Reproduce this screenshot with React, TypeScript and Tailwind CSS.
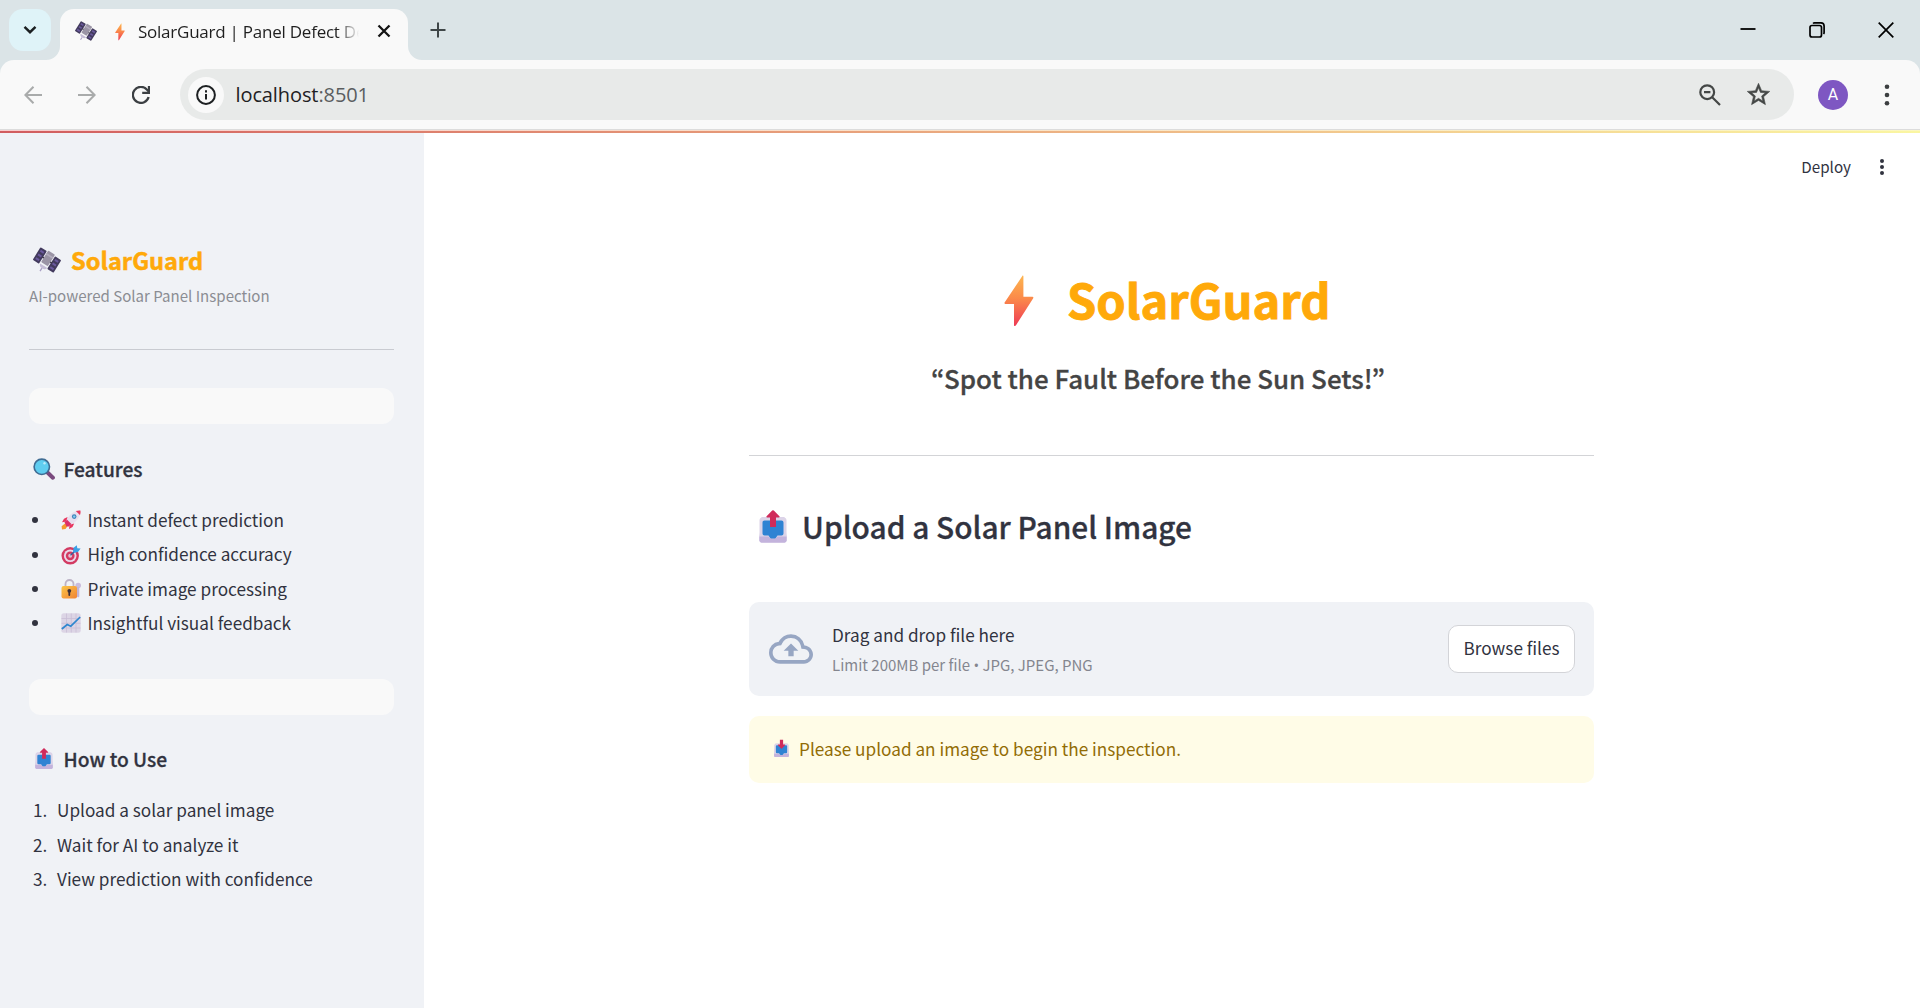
import type { ReactNode } from "react";

type IconProps = { className?: string };

const features: { icon: ReactNode; label: string }[] = [
  { icon: <Rocket className="size-[20px]" />, label: "Instant defect prediction" },
  { icon: <Target className="size-[20px]" />, label: "High confidence accuracy" },
  { icon: <Lock className="size-[20px]" />, label: "Private image processing" },
  { icon: <Chart className="size-[20px]" />, label: "Insightful visual feedback" },
];

const steps = ["Upload a solar panel image", "Wait for AI to analyze it", "View prediction with confidence"];

function Satellite({ className }: IconProps) {
  return (
    <svg viewBox="0 0 32 32" className={className}>
      <g transform="rotate(32 16 16)">
        <rect x="2" y="7.500" width="8.500" height="17" rx="1.200" fill="#433b5e" />
        <rect x="21.500" y="7.500" width="8.500" height="17" rx="1.200" fill="#433b5e" />
        <path d="M4 11h4.500M4 16h4.500M4 21h4.500M23.500 11h4.500M23.500 16h4.500M23.500 21h4.500" stroke="#6b5a9e" strokeWidth="2.400" />
        <path d="M10 16h12" stroke="#2f2b3a" strokeWidth="1.600" />
        <rect x="11.500" y="6" width="9" height="15.500" rx="1" fill="#9a94a5" />
        <path d="M11.500 10.500h9" stroke="#b3adbe" strokeWidth="2" />
        <path d="M11.500 23.500h9.500a4.800 4.200 0 0 1-9.500 0z" fill="#c5bdd6" />
        <path d="M16 27v4" stroke="#a89fc4" strokeWidth="1.500" />
      </g>
    </svg>
  );
}

function Bolt({ className }: IconProps) {
  return (
    <svg viewBox="0 0 30 52" className={className}>
      <defs>
        <linearGradient id="bolt" x1="0" y1="0" x2="0" y2="1">
          <stop offset="0" stopColor="#fdb54f" />
          <stop offset="0.45" stopColor="#fb8a4a" />
          <stop offset="1" stopColor="#ee3a55" />
        </linearGradient>
      </defs>
      <path d="M18.500 .8 .6 27.500c-.4.8 0 1.500.8 1.500H10v21.200c0 1 1.300 1.200 1.800.4L29.200 23.200c.5-.8 0-1.400-.8-1.400h-9V1.200c0-.7-.6-1-.9-.4z" fill="url(#bolt)" />
    </svg>
  );
}

function Tray({ className, down = false }: IconProps & { down?: boolean }) {
  return (
    <svg viewBox="0 0 28 33" className={className}>
      <path d="M2.500 7.500h23l2 20v3a2 2 0 0 1-2 2h-23a2 2 0 0 1-2-2v-3z" fill="#b9a5d6" />
      <rect x=".5" y="7.500" width="27" height="21" rx="3" fill="#dcd4e8" />
      <path d="M.5 26.500h9l2 2.500h5l2-2.500h9v4a2 2 0 0 1-2 2h-23a2 2 0 0 1-2-2z" fill="#c3b3dc" />
      <path d="M5.500 10.500h17a2 2 0 0 1 2 2v11a2 2 0 0 1-2 2h-4l-1.500 2.300a1.500 1.500 0 0 1-1.300.7h-3.400a1.500 1.500 0 0 1-1.300-.7l-1.500-2.300h-4a2 2 0 0 1-2-2v-11a2 2 0 0 1 2-2z" fill="#2f83d3" />
      <path d={down ? "M11 0h6v9h3.200c.8 0 1 .7.500 1.300l-6 6.200a1 1 0 0 1-1.400 0l-6-6.200c-.5-.6-.3-1.300.5-1.300H11z" : "M13.200.6 7.600 6.200c-.5.6-.3 1.300.5 1.300H11V17h6V7.500h2.900c.8 0 1-.7.5-1.300L14.800.6a1.100 1.100 0 0 0-1.600 0z"} fill="#d02b5b" />
    </svg>
  );
}

function Magnifier({ className }: IconProps) {
  return (
    <svg viewBox="0 0 22 22" className={className}>
      <path d="m14.500 14.500 5.400 5.200" stroke="#7a4a7e" strokeWidth="4" strokeLinecap="round" />
      <circle cx="8.800" cy="8.800" r="7.700" fill="#5fcdf0" stroke="#3f6c93" strokeWidth="1.600" />
      <circle cx="11.500" cy="5.300" r="1.200" fill="#b9ecfb" />
    </svg>
  );
}

function Rocket({ className }: IconProps) {
  return (
    <svg viewBox="0 0 20 20" className={className}>
      <path d="M4 13.500 .6 16.200l.4 3.300 3.500-.4 2.500-3.600z" fill="#f59a2f" />
      <path d="M6.500 7 3 8.700 1 12.300l4.800-.8zM13.200 13.500l-1.700 3.500-3.500 2 .6-4.500z" fill="#e8375f" />
      <path d="M4.300 13C6 7.500 10 2.500 15.500.9l3.600 3.600C17.500 10 12.500 14 7.100 15.800z" fill="#e9dfee" />
      <path d="M14.800 1.100C16.400.5 18 .2 19.400.5c.4 1.500.1 3-.5 4.600z" fill="#e8375f" />
      <path d="m3.500 12.300 2.600-2.600 4.300 4.300-2.600 2.600-2.300-.1z" fill="#dc2f68" />
      <circle cx="13.200" cy="6.600" r="2.300" fill="#3f84b9" />
      <circle cx="13.200" cy="6.600" r="1.200" fill="#86cdf0" />
    </svg>
  );
}

function Target({ className }: IconProps) {
  return (
    <svg viewBox="0 0 20 20" className={className}>
      <circle cx="9.200" cy="10.800" r="8.700" fill="#d33a62" />
      <circle cx="9.200" cy="10.800" r="6.300" fill="#ead9ea" />
      <circle cx="9.200" cy="10.800" r="4.400" fill="#d33a62" />
      <circle cx="9.200" cy="10.800" r="2" fill="#e3bfd3" />
      <path d="m9.500 10.300 6-5.600" stroke="#2f5f9b" strokeWidth="1.200" />
      <path d="m12 6.800.6-4L15.800.2l.5 3 3.300.4-2.600 3.300-4 .8z" fill="#3aa0e6" />
    </svg>
  );
}

function Lock({ className }: IconProps) {
  return (
    <svg viewBox="0 0 20 20" className={className}>
      <defs>
        <linearGradient id="lock" x1="0" y1="0" x2="1" y2="1">
          <stop offset="0" stopColor="#fbc546" />
          <stop offset="1" stopColor="#f08334" />
        </linearGradient>
      </defs>
      <circle cx="17.200" cy="6.500" r="2.800" fill="#c9bcdc" />
      <path d="M16 8h2.300v9.500l-1.200 1-1.100-1z" fill="#c0b4d6" />
      <path d="M4.500 8V5a4 4 0 0 1 8 0v3" stroke="#bdb3c6" strokeWidth="1.800" fill="none" />
      <rect x=".5" y="7" width="15.500" height="12.500" rx="2" fill="url(#lock)" />
      <circle cx="8.300" cy="11.800" r="1.900" fill="#3d3038" />
      <path d="M8.300 12v4" stroke="#3d3038" strokeWidth="1.800" strokeLinecap="round" />
    </svg>
  );
}

function Chart({ className }: IconProps) {
  return (
    <svg viewBox="0 0 20 20" className={className}>
      <rect x=".3" y=".3" width="19.400" height="19.400" rx="2.500" fill="#dcd5e5" />
      <path d="M5.500.5v19M10.300.5v19M15 .5v19M.500 5.500h19M.500 10.300h19M.500 15h19" stroke="#c9bed6" strokeWidth=".8" />
      <path d="m.8 16 5.400-4.500 3.600 1.700L19.200 4" stroke="#2f87cf" strokeWidth="1.700" fill="none" />
    </svg>
  );
}

function CloudUpload({ className }: IconProps) {
  return (
    <svg viewBox="0 0 24 24" fill="currentColor" className={className}>
      <path d="M19.350 10.040A7.490 7.490 0 0 0 12 4C9.110 4 6.600 5.640 5.350 8.040A5.994 5.994 0 0 0 0 14c0 3.310 2.690 6 6 6h13c2.760 0 5-2.240 5-5 0-2.640-2.050-4.780-4.650-4.960zM19 18H6c-2.210 0-4-1.790-4-4 0-2.050 1.530-3.760 3.560-3.970l1.070-.11.500-.95A5.469 5.469 0 0 1 12 6c2.620 0 4.880 1.860 5.390 4.430l.300 1.500 1.530.110A2.980 2.980 0 0 1 22 15c0 1.650-1.350 3-3 3zM8 13h2.550v3h2.900v-3H16l-4-4z" />
    </svg>
  );
}

function TabStrip() {
  return (
    <div className="flex h-[60px] bg-[#dbe4e7]">
      <div className="ml-[9px] mt-[9px] flex size-[42px] items-center justify-center rounded-[14px] bg-[#dff3f8]">
        <svg viewBox="0 0 14 10" className="h-[10px] w-[14px]" fill="none" stroke="#1b1f21" strokeWidth="2.400">
          <path d="m1.500 1.800 5.500 5.400 5.500-5.400" />
        </svg>
      </div>
      <div className="relative ml-[9px] mt-[9px] flex h-[51px] w-[348px] items-center rounded-t-[14px] bg-[#f9f9f9] pb-[8px]">
        <svg viewBox="0 0 14 14" className="absolute -left-[14px] bottom-0 size-[14px]" fill="#f9f9f9">
          <path d="M14 0v14H0A14 14 0 0 0 14 0z" />
        </svg>
        <svg viewBox="0 0 14 14" className="absolute -right-[14px] bottom-0 size-[14px]" fill="#f9f9f9">
          <path d="M0 0v14h14A14 14 0 0 1 0 0z" />
        </svg>
        <Satellite className="ml-[15px] size-[22px]" />
        <Bolt className="ml-[18px] mt-[2px] h-[18px] w-[10px]" />
        <div className="ml-[13px] mt-[2px] w-[221px] overflow-hidden whitespace-nowrap bg-linear-to-r from-[#1f1f1f] from-90% to-transparent bg-clip-text font-['Open_Sans',sans-serif] text-[17px] leading-[26px] tracking-[-0.24px] text-transparent">
          SolarGuard | Panel Defect De
        </div>
        <svg viewBox="0 0 14 14" className="ml-[18px] size-[14px]" stroke="#141414" strokeWidth="2.300">
          <path d="m1.500 1.500 11 11M12.500 1.500l-11 11" />
        </svg>
      </div>
      <svg viewBox="0 0 16 16" className="ml-[22px] mt-[22px] size-[16px]" stroke="#3f4648" strokeWidth="2">
        <path d="M8 .5v15M.5 8h15" />
      </svg>
      <svg viewBox="0 0 16 16" className="ml-auto mr-[53px] mt-[21px] size-[16px]" stroke="#000" strokeWidth="1.800">
        <path d="M.5 8h15" />
      </svg>
      <svg viewBox="0 0 16 16" className="mr-[53px] mt-[22px] size-[16px]" stroke="#000" strokeWidth="1.700" fill="none">
        <rect x="1" y="3.500" width="11.500" height="11.500" rx="2" />
        <path d="M4 1.500c.4-.4.900-.6 1.500-.6H12A3.200 3.200 0 0 1 15.100 4v6.500c0 .6-.2 1.100-.6 1.500" />
      </svg>
      <svg viewBox="0 0 16 16" className="mr-[26px] mt-[22px] size-[16px]" stroke="#000" strokeWidth="1.700">
        <path d="m.7.700 14.600 14.600M15.300.7.700 15.300" />
      </svg>
    </div>
  );
}

function Toolbar() {
  return (
    <div className="bg-[#dbe4e7]">
      <div className="flex h-[69px] items-start rounded-t-[14px] bg-[#f9f9f9]">
        <svg viewBox="0 0 18 18" className="ml-[24px] mt-[26px] size-[18px]" stroke="#a9abab" strokeWidth="2" fill="none">
          <path d="M18 9H1.500M9.500 .8 1.400 9l8.100 8.200" />
        </svg>
        <svg viewBox="0 0 18 18" className="ml-[36px] mt-[26px] size-[18px]" stroke="#a9abab" strokeWidth="2" fill="none">
          <path d="M0 9h16.500M8.500.8 16.600 9l-8.100 8.200" />
        </svg>
        <svg viewBox="0 0 18 18" className="ml-[36px] mt-[26px] size-[18px]" stroke="#3c4043" strokeWidth="2.300" fill="none">
          <path d="M16.600 11A8 8 0 1 1 14.800 3.500l2.200 2.300" />
          <path d="M17 0v6.900h-6.800" />
        </svg>
        <div className="ml-[30px] mt-[9px] flex h-[51px] w-[1614px] items-center rounded-full bg-[#e8eae9] pl-[8px]">
          <div className="flex size-[36px] items-center justify-center rounded-full bg-[#f9f9f9]">
            <svg viewBox="0 0 20 20" className="size-[20px]" fill="none" stroke="#1d2022" strokeWidth="2">
              <circle cx="10" cy="10" r="8.900" />
              <path d="M10 9v5.500M10 5.300v2.200" />
            </svg>
          </div>
          <div className="ml-[11.500px] font-['Open_Sans',sans-serif] text-[20px] leading-[28px] tracking-[-0.1px] text-[#1f2123]">
            localhost<span className="text-[#5a5d5f]">:8501</span>
          </div>
          <svg viewBox="0 0 22 22" className="ml-auto size-[22px]" fill="none" stroke="#444746" strokeWidth="2.200">
            <circle cx="8.200" cy="8.200" r="6.900" />
            <path d="M13.200 13.200 21 21M5 8.200h6.400" />
          </svg>
          <svg viewBox="0 0 24 24" className="ml-[24px] mr-[22px] size-[27px]" fill="#444746" stroke="#444746" strokeWidth=".5">
            <path d="m22 9.240-7.190-.620L12 2 9.190 8.630 2 9.240l5.460 4.730L5.820 21 12 17.270 18.180 21l-1.630-7.030L22 9.240zM12 15.400l-3.760 2.270 1-4.280-3.320-2.880 4.380-.380L12 6.100l1.710 4.040 4.380.380-3.320 2.880 1 4.280L12 15.400z" />
          </svg>
        </div>
        <div className="ml-[24px] mt-[20px] flex size-[30px] items-center justify-center rounded-full bg-[#7e57c2] font-['Roboto',sans-serif] text-[16px] leading-none text-white">
          A
        </div>
        <svg viewBox="0 0 6 22" className="ml-[36px] mt-[24px] h-[22px] w-[6px]" fill="#3c3f41">
          <circle cx="3" cy="2.800" r="2.300" />
          <circle cx="3" cy="11" r="2.300" />
          <circle cx="3" cy="19.200" r="2.300" />
        </svg>
      </div>
    </div>
  );
}

function Sidebar() {
  return (
    <aside className="w-[424px] shrink-0 bg-[#f0f2f6] pl-[29px] pr-[30px] text-[#31333f]">
      <div className="mt-[109px] flex h-[36px] items-center text-[23.6px] font-bold leading-[36px] text-[#ffa90a] [-webkit-text-stroke:0.5px]">
        <Satellite className="ml-[4px] mr-[10px] size-[28px]" />
        SolarGuard
      </div>
      <div className="mt-[6px] text-[15.05px] leading-[24px] text-[#8b8d93]">AI-powered Solar Panel Inspection</div>
      <div className="mt-[41px] h-px bg-[#c9cbd1]" />
      <div className="mt-[38px] h-[36px] rounded-[12px] bg-[#f9f9f9]" />
      <div className="mt-[31px] flex h-[28px] items-center text-[19.2px] font-medium leading-[28px] [-webkit-text-stroke:0.3px]">
        <Magnifier className="ml-[4px] mr-[8.500px] size-[22px]" />
        Features
      </div>
      <ul className="mt-[20px] text-[17.2px] leading-[34.4px]">
        {features.map((f) => (
          <li key={f.label} className="flex h-[34.4px] items-center">
            <span className="ml-[3px] mr-[23px] size-[6px] rounded-full bg-[#31333f]" />
            {f.icon}
            <span className="ml-[6.500px]">{f.label}</span>
          </li>
        ))}
      </ul>
      <div className="mt-[38.4px] h-[36px] rounded-[12px] bg-[#f9f9f9]" />
      <div className="mt-[30px] flex h-[28px] items-center text-[19.2px] font-medium leading-[28px] [-webkit-text-stroke:0.3px]">
        <Tray className="ml-[6px] mr-[10.500px] h-[21px] w-[18px]" />
        How to Use
      </div>
      <ol className="mt-[20.3px] text-[17.2px] leading-[34.4px]">
        {steps.map((s, i) => (
          <li key={s} className="flex h-[34.4px] items-center">
            <span className="ml-[4px] w-[24px]">{i + 1}.</span>
            {s}
          </li>
        ))}
      </ol>
    </aside>
  );
}

function Main() {
  return (
    <main className="relative grow bg-white pl-[325px] text-[#31333f]">
      <div className="absolute right-[35px] top-[20px] flex h-[26px] items-center text-[15.2px] leading-[26px]">
        Deploy
        <svg viewBox="0 0 6 18" className="ml-[28px] mt-[2px] h-[18px] w-[6px]" fill="#31333f">
          <circle cx="3" cy="3" r="2" />
          <circle cx="3" cy="9" r="2" />
          <circle cx="3" cy="15" r="2" />
        </svg>
      </div>
      <div className="w-[845px]">
        <h1 className="mt-[135.5px] flex h-[60px] items-center pl-[255px] text-[47px] font-bold leading-[60px] text-[#ffa90a] [-webkit-text-stroke:0.9px]">
          <Bolt className="mr-[33px] mt-[4px] h-[52px] w-[30px]" />
          SolarGuard
        </h1>
        <p className="mt-[29px] pl-[182px] font-['Noto_Sans_CJK_KR','Noto_Sans_CJK_SC',sans-serif] text-[25.95px] font-medium leading-[40px] text-[#444444] [-webkit-text-stroke:0.3px]">
          “Spot the Fault Before the Sun Sets!”
        </p>
        <div className="mt-[57.5px] h-px bg-[#d3d4d7]" />
        <h2 className="mt-[50px] flex h-[40px] items-center text-[29.85px] font-medium leading-[40px] [-webkit-text-stroke:0.3px]">
          <Tray className="ml-[10px] mr-[15px] h-[33px] w-[28px]" />
          Upload a Solar Panel Image
        </h2>
        <div className="mt-[56px] flex h-[94px] items-center rounded-[10px] bg-[#f0f2f6] pl-[20px] pr-[19px]">
          <CloudUpload className="size-[44px] text-[#97a6c3]" />
          <div className="ml-[19px]">
            <div className="mt-[1px] text-[17.2px] leading-[26px]">Drag and drop file here</div>
            <div className="mt-[5px] text-[15px] leading-[24px] text-[#84868f]">
              Limit 200MB per file <span className="font-['Open_Sans',sans-serif]">•</span> JPG, JPEG, PNG
            </div>
          </div>
          <button className="ml-auto h-[48px] w-[127px] rounded-[10px] border border-[#d3d4d8] bg-white pb-[2px] text-[17.2px] leading-[26px]">
            Browse files
          </button>
        </div>
        <div className="mt-[20px] flex h-[67px] items-center rounded-[10px] bg-[#fffce7] pb-[2px] text-[17.2px] leading-[28px] text-[#926c05]">
          <Tray down className="ml-[25px] mr-[10px] h-[19px] w-[15px]" />
          Please upload an image to begin the inspection.
        </div>
      </div>
    </main>
  );
}

export default function App() {
  return (
    <div className="flex h-[1008px] w-[1920px] flex-col overflow-hidden font-['Noto_Sans_CJK_SC','Noto_Sans',sans-serif]">
      <TabStrip />
      <Toolbar />
      <div className="h-px bg-[#dcdcdc]" />
      <div className="h-px bg-linear-to-r from-[#f9cdcd] to-[#fbf7c0]" />
      <div className="h-[2px] bg-linear-to-r from-[#d15c5f] to-[#faf6a2]" />
      <div className="flex grow">
        <Sidebar />
        <Main />
      </div>
    </div>
  );
}
